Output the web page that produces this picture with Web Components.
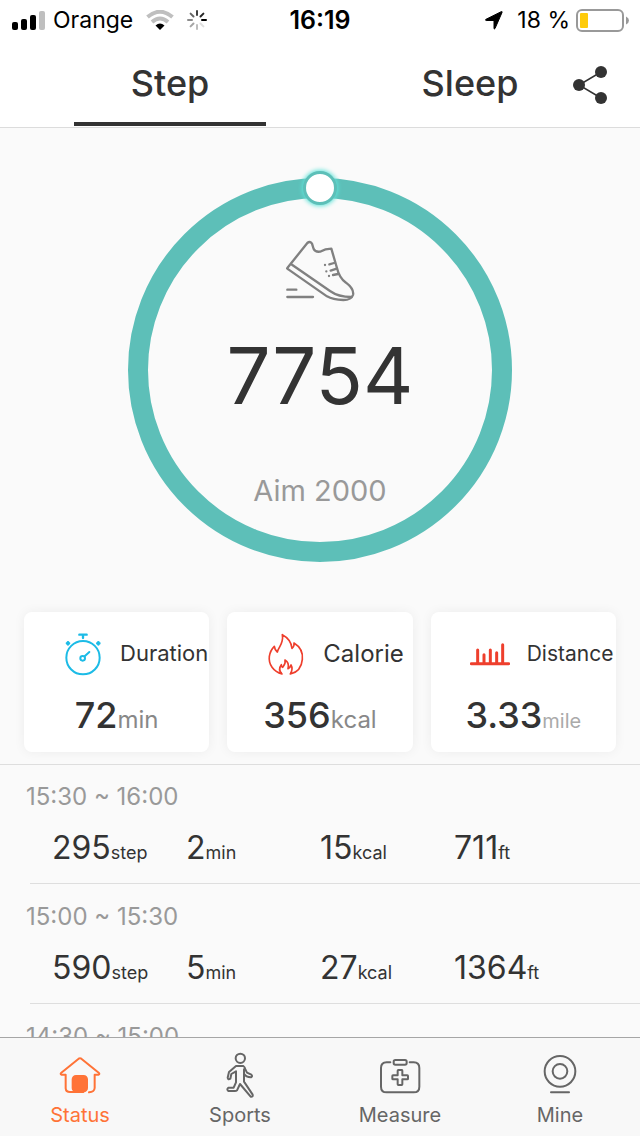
<!DOCTYPE html>
<html lang="en">
<head>
<meta charset="utf-8">
<meta name="viewport" content="width=device-width, initial-scale=1">
<title>Status</title>
<style>
    body {
        margin: 0;
        font-family: Inter, "Liberation Sans", sans-serif;
        color: #333333;
        background: #fafafa;
    }
</style>
</head>
<body>
<fitness-app></fitness-app>

<script>
function define(name, html) {
    const template = document.createElement('template');
    template.innerHTML = html;
    customElements.define(name, class extends HTMLElement {
        constructor() {
            super();
            this.attachShadow({ mode: 'open' }).appendChild(template.content.cloneNode(true));
        }
    });
}

define('status-bar', `
    <style>
        :host {
            display: grid;
            grid-template-columns: 1fr auto 1fr;
            align-items: center;
            height: 40px;
            padding: 0 11px;
            font-size: 23px;
            color: #000000;
            background: #ffffff;
        }
        div {
            display: flex;
            align-items: center;
        }
        .signal { margin-right: 8px; }
        .wifi { margin: 0 13px; }
        .time {
            font-size: 25px;
            font-size: 25px;
            font-weight: 600;
        }
        .right { justify-content: flex-end; }
        .right span { margin: 0 6px 0 14px; }
    </style>
    <div>
        <svg class="signal" width="34" height="21" viewBox="0 0 34 21">
            <rect x="1" y="12" width="6" height="8" rx="2"/>
            <rect x="10" y="9" width="6" height="11" rx="2"/>
            <rect x="19" y="5" width="6" height="15" rx="2"/>
            <rect x="28" y="1" width="6" height="19" rx="2" fill="#bfbfbf"/>
        </svg>
        <span>Orange</span>
        <svg class="wifi" width="28" height="20" viewBox="0 0 28 20">
            <g fill="none" stroke="#bfbfbf" stroke-width="4">
                <path d="M1.500 7Q14-3.500 26.500 7"/>
                <path d="M6 12Q14 5 22 12"/>
            </g>
            <path d="M9.500 15.500Q14 11.500 18.500 15.500L14 20Z"/>
        </svg>
        <svg width="20" height="20" viewBox="0 0 20 20" stroke="#000000" stroke-width="2" stroke-linecap="round">
            <path d="M10 1V5" opacity=".75"/>
            <path d="M16.400 3.600L13.500 6.500" opacity=".85"/>
            <path d="M19 10H15"/>
            <path d="M16.400 16.400L13.500 13.500" opacity=".12"/>
            <path d="M10 19V15" opacity=".25"/>
            <path d="M3.600 16.400L6.500 13.500" opacity=".35"/>
            <path d="M1 10H5" opacity=".45"/>
            <path d="M3.600 3.600L6.500 6.500" opacity=".6"/>
        </svg>
    </div>
    <div class="time">16:19</div>
    <div class="right">
        <svg width="18" height="19" viewBox="0 0 18 19">
            <path d="M17 1.500L10 17.500Q9.300 18.800 9 17.200V9.500H1.200Q-.3 9.200 1 8.300L16.200 .7Q17.600 .3 17 1.500Z" stroke="#000000" stroke-linejoin="round"/>
        </svg>
        <span>18 %</span>
        <svg width="53" height="23" viewBox="0 0 53 23">
            <rect x="1" y="1" width="46" height="21" rx="5" fill="none" stroke="#999999" stroke-width="2"/>
            <rect x="4" y="4" width="8" height="15" rx="1" fill="#fecb0b"/>
            <path d="M50 7.500Q53 9 53 11.500T50 15.500Z" fill="#999999"/>
        </svg>
    </div>
`);

define('top-tabs', `
    <style>
        :host {
            display: grid;
            grid-template-columns: 74fr 192fr 108fr 192fr 74fr;
            height: 87px;
            border-bottom: 1px solid #dcdcdc;
            background: #ffffff;
        }
        button {
            padding: 4px 0 0;
            border: 0;
            background: none;
            font: 500 36px/44px Inter, "Liberation Sans", sans-serif;
            color: #333333;
        }
        .tab {
            grid-column: 4;
            height: 86px;
            border-bottom: 4px solid transparent;
        }
        .tab.active {
            grid-column: 2;
            border-color: #333333;
        }
        .share {
            padding-left: 6px;
            text-align: left;
        }
        .share svg {
            display: block;
            margin-bottom: 2px;
        }
    </style>
    <button class="tab active">Step</button>
    <button class="tab">Sleep</button>
    <button class="share" aria-label="Share">
        <svg width="36" height="40" viewBox="0 0 36 40" fill="#333333">
            <path d="M29 7L7 20L29 33" fill="none" stroke="#333333" stroke-width="1.500"/>
            <circle cx="29" cy="7" r="6"/>
            <circle cx="7" cy="20" r="6"/>
            <circle cx="29" cy="33" r="6"/>
        </svg>
    </button>
`);

define('step-ring', `
    <style>
        :host {
            box-sizing: border-box;
            display: flex;
            flex-direction: column;
            align-items: center;
            position: relative;
            width: 384px;
            height: 384px;
            margin: 50px auto;
            padding-top: 41px;
            border: 20px solid #5dbfb8;
            border-radius: 50%;
        }
        .knob {
            box-sizing: border-box;
            position: absolute;
            top: -27px;
            width: 34px;
            height: 34px;
            border: 3px solid #5dbfb8;
            border-radius: 50%;
            background: #ffffff;
            box-shadow: 0 0 4px 1px #5fe3d8;
        }
        .steps {
            margin-top: 25px;
            font-size: 78px;
            line-height: 96px;
        }
        .aim {
            margin-top: 49px;
            font-size: 29px;
            line-height: 36px;
            color: #999999;
        }
    </style>
    <div class="knob"></div>
    <svg width="70" height="64" viewBox="195 238 210 192" fill="none" stroke="#808080" stroke-width="7" stroke-linecap="round" stroke-linejoin="round">
        <path d="M202 325L262 250Q270 243 276 252L281 268Q286 278 300 276Q316 267 334 267L350 322Q358 356 378 369Q403 388 399 406Q394 421 370 421Q338 420 321 410L205 329Q200 327 202 325Z"/>
        <path d="M216 315L330 394Q355 412 394 412"/>
        <path d="M328 314L342 310M332 333L350 327M339 346L354 343M202 390H229M202 412H279"/>
        <path d="M315 316V316M319 335V335M327 349V349"/>
    </svg>
    <div class="steps"><slot name="steps"></slot></div>
    <div class="aim"><slot name="aim"></slot></div>
`);

define('stat-card', `
    <style>
        :host {
            display: block;
            flex: 1 1 0;
            min-width: 0;
            height: 140px;
            overflow: hidden;
            border-radius: 8px;
            background: #ffffff;
            box-shadow: 0 0 12px rgba(0, 0, 0, 0.06);
        }
        .head {
            display: flex;
            align-items: center;
            gap: 17px;
            height: 46px;
            padding: 19px 0 0 39px;
            font-size: var(--label-size, 22px);
            white-space: nowrap;
        }
        .head slot[name="label"] {
            display: block;
            padding-bottom: 2px;
        }
        .value {
            display: flex;
            justify-content: center;
            align-items: baseline;
            margin-top: 16px;
            font-size: 36px;
            font-weight: 500;
            line-height: 44px;
            white-space: nowrap;
        }
        .unit {
            font-size: var(--unit-size, 24px);
            font-weight: 400;
            color: var(--unit-color, #888888);
        }
    </style>
    <div class="head"><slot name="icon"></slot><slot name="label"></slot></div>
    <div class="value"><slot></slot><span class="unit"><slot name="unit"></slot></span></div>
`);

define('log-row', `
    <style>
        :host {
            box-sizing: border-box;
            display: block;
            height: 120px;
            padding-top: 17px;
        }
        .period {
            padding-left: 26px;
            font-size: 24px;
            line-height: 30px;
            color: #999999;
        }
        .values {
            display: grid;
            grid-template-columns: repeat(4, 1fr);
            height: 71px;
            margin-left: 30px;
            padding: 0 52px 0 22px;
            border-bottom: 1px solid #dedede;
            font-size: 32px;
            line-height: 72px;
        }
    </style>
    <div class="period"><slot name="period"></slot></div>
    <div class="values"><slot></slot></div>
`);

define('unit-value', `
    <style>
        :host {
            display: block;
            white-space: nowrap;
        }
        span { font-size: 18px; }
    </style>
    <slot></slot><span><slot name="unit"></slot></span>
`);

define('tab-item', `
    <style>
        :host {
            display: block;
            flex: 1;
            color: #666666;
        }
        a {
            display: flex;
            flex-direction: column;
            align-items: center;
            gap: 5px;
            padding-top: 14px;
            font-size: 20px;
            line-height: 24px;
            color: inherit;
            text-decoration: none;
        }
        :host([active]) { color: #ff7337; }
    </style>
    <a href="#"><slot name="icon"></slot><slot></slot></a>
`);

define('fitness-app', `
    <style>
        :host {
            display: flex;
            flex-direction: column;
            height: 100vh;
        }
        main {
            flex: 1;
            min-height: 0;
            overflow-y: auto;
            scrollbar-width: none;
        }
        .cards {
            display: flex;
            gap: 18px;
            padding: 0 24px 12px;
            border-bottom: 1px solid #dedede;
        }
        .calorie { --label-size: 24px; }
        .distance {
            --label-size: 21px;
            --unit-size: 20px;
            --unit-color: #aaaaaa;
        }
        nav {
            display: flex;
            height: 98px;
            border-top: 1px solid #a6a6a6;
            background: #f8f8f8;
        }
        svg {
            display: block;
            flex: none;
            fill: none;
            stroke-linecap: round;
            stroke-linejoin: round;
        }
        nav svg {
            stroke: currentColor;
            stroke-width: 6;
        }
    </style>
    <status-bar></status-bar>
    <top-tabs></top-tabs>
    <main>
        <step-ring>
            <span slot="steps">7754</span>
            <span slot="aim">Aim 2000</span>
        </step-ring>
        <div class="cards">
            <stat-card>
                <svg slot="icon" width="40" height="46" viewBox="158 92 120 138" stroke="#1cbbe6" stroke-width="6">
                    <circle cx="218" cy="172" r="50"/>
                    <circle cx="217" cy="174" r="7"/>
                    <path d="M223 168L237 155"/>
                    <path d="M207 103H229M218 104V113" stroke-width="7"/>
                    <path d="M170 129H176M173 126V132M261 129H267M264 126V132" stroke-width="8"/>
                </svg>
                <span slot="label">Duration</span><span>72</span><span slot="unit">min</span>
            </stat-card>
            <stat-card class="calorie">
                <svg slot="icon" width="40" height="46" viewBox="154 92 120 138" stroke="#ee3f2d" stroke-width="5">
                    <path d="M202 221C176 214 161 192 164 168C166 155 172 145 179 138Q180 148 188 155C191 140 208 130 203 103C220 112 230 124 232 144Q240 137 238 128C256 139 265 158 263 177C261 200 249 216 227 221C233 211 235 204 229 194Q227 202 220 205C223 193 220 184 211 179C214 190 207 196 204 201Q200 199 200 193C193 202 194 213 202 221Z"/>
                </svg>
                <span slot="label">Calorie</span><span>356</span><span slot="unit">kcal</span>
            </stat-card>
            <stat-card class="distance">
                <svg slot="icon" width="40" height="46" viewBox="149 92 120 138" stroke="#ee3f2d" stroke-width="9">
                    <path d="M153 190H265M172 188V149M191 188V163M210 188V149M229 188V157M247 188V133"/>
                </svg>
                <span slot="label">Distance</span><span>3.33</span><span slot="unit">mile</span>
            </stat-card>
        </div>
        <log-row>
            <span slot="period">15:30 ~ 16:00</span>
            <unit-value>295<span slot="unit">step</span></unit-value>
            <unit-value>2<span slot="unit">min</span></unit-value>
            <unit-value>15<span slot="unit">kcal</span></unit-value>
            <unit-value>711<span slot="unit">ft</span></unit-value>
        </log-row>
        <log-row>
            <span slot="period">15:00 ~ 15:30</span>
            <unit-value>590<span slot="unit">step</span></unit-value>
            <unit-value>5<span slot="unit">min</span></unit-value>
            <unit-value>27<span slot="unit">kcal</span></unit-value>
            <unit-value>1364<span slot="unit">ft</span></unit-value>
        </log-row>
        <log-row>
            <span slot="period">14:30 ~ 15:00</span>
        </log-row>
    </main>
    <nav>
        <tab-item active>
            <svg slot="icon" width="44" height="46" viewBox="174 98 132 138">
                <path d="M197 166H184Q180 164 184 160L236 118Q240 115 244 118L296 160Q300 164 296 166H284V206Q283 218 267 219M197 166V207Q198 218 210 218H250"/>
                <rect x="218" y="170" width="43" height="46" rx="10" fill="currentColor"/>
            </svg>
            Status
        </tab-item>
        <tab-item>
            <svg slot="icon" width="44" height="46" viewBox="654 98 132 138">
                <circle cx="721" cy="117" r="14"/>
                <path d="M708 140H730Q735 143 736 150L741 160L754 166Q759 171 753 174Q738 173 732 163V187L758 226Q760 233 752 232L720 194L711 213Q708 216 702 215H685Q679 210 685 205H701L708 189V156L694 164L691 178Q684 183 683 175L687 158Z"/>
                <path d="M732 163V150"/>
            </svg>
            Sports
        </tab-item>
        <tab-item>
            <svg slot="icon" width="44" height="46" viewBox="171 98 132 138">
                <path d="M208 129H197Q180 129 180 146V202Q180 219 197 219H278Q295 219 295 202V146Q295 129 278 129H266"/>
                <rect x="218" y="122" width="39" height="14" rx="5"/>
                <path d="M232 152H243Q244 152 244 154V168H259Q261 168 261 170V178Q261 180 259 180H244V195Q244 197 242 197H232Q230 197 230 195V180H216Q214 180 214 178V170Q214 168 216 168H230V154Q230 152 232 152Z"/>
            </svg>
            Measure
        </tab-item>
        <tab-item>
            <svg slot="icon" width="44" height="46" viewBox="651 98 132 138">
                <circle cx="717" cy="156" r="46"/>
                <circle cx="717" cy="156" r="22"/>
                <path d="M690 219H744"/>
            </svg>
            Mine
        </tab-item>
    </nav>
`);
</script>
</body>
</html>
